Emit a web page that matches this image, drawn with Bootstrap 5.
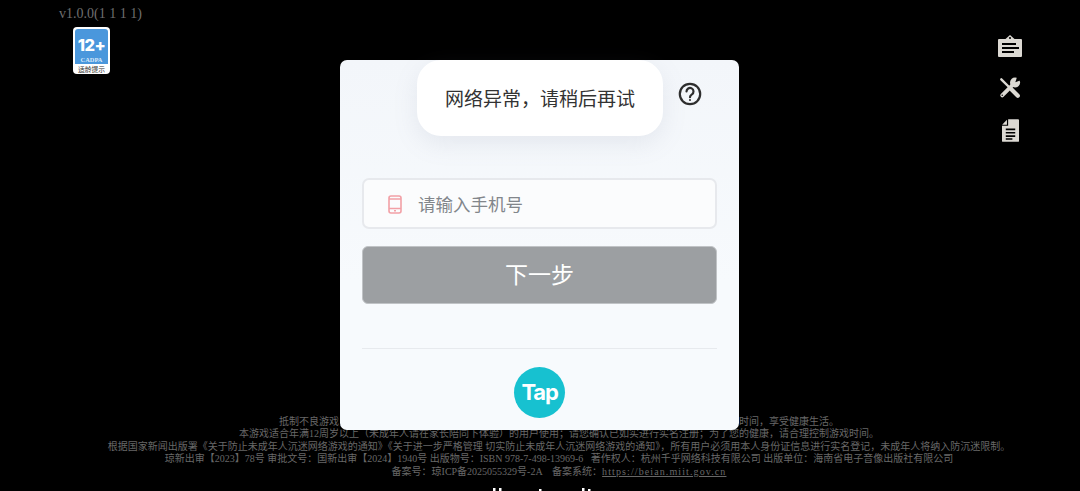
<!DOCTYPE html>
<html lang="zh-CN">
<head>
  <meta charset="UTF-8">
  <meta name="viewport" content="width=device-width, initial-scale=1.0">
  <title>登录</title>
  <link rel="stylesheet" href="https://cdn.jsdelivr.net/npm/bootstrap@5.3.0/dist/css/bootstrap.min.css">
  <style>
    html, body { height: 491px; overflow: hidden; background: #000; }
    body { font-family: "Noto Sans CJK SC", "Noto Sans", sans-serif; }
    .game-screen { height: 491px; overflow: hidden; }
    .top-left { padding: 6px 0 0 59px; }
    .version-text { font: 14px/16px "Liberation Serif", "Noto Sans CJK SC", serif; color: #6e6e6e; }
    .age-badge { display: block; margin: 5px 0 0 14px; }
    .side-tools { padding: 35px 58px 0 0; gap: 20px; }
    .legal-text { font: 10px/12.4px "Liberation Serif", "Noto Sans CJK SC", serif; color: #686868; padding-left: 38px; white-space: nowrap; }
    .legal-text a { color: #686868; letter-spacing: 1.1px; }
    .cut-title { display: block; margin-top: 10px; flex-shrink: 0; }
    .login-box { position: absolute; left: 340px; top: 60px; width: 399px; height: 370px; background: linear-gradient(180deg, #f3f6fa 0%, #f7fafd 60%); border-radius: 7px; padding: 118px 22px 0; }
    .toast-box { position: absolute; left: 77px; top: 0; width: 246px; height: 76px; padding-top: 1px; background: #fff; border-radius: 24px; box-shadow: 0 8px 24px rgba(120, 135, 155, .13); color: #333; font-size: 19px; }
    .help-icon { position: absolute; left: 338px; top: 22px; }
    .phone-field { height: 51px; background: #fbfcfd; border: 2px solid #e7e9ed; border-radius: 7px; padding: 1px 0 0 24px; gap: 16px; }
    .phone-hint { font-size: 17.5px; color: #82868b; }
    .next-btn { display: block; width: 100%; height: 58px; margin-top: 17px; background: #9b9ea1; border: 1px solid #c0c3c6; border-radius: 6px; color: #fff; font-size: 23px; padding: 0 0 3px; }
    .next-btn:disabled { background: #9c9fa2; border-color: #c0c3c6; color: #fff; opacity: 1; }
    .box-line { height: 1px; margin: 44px 0 0; background: #e7eaee; }
    .tap-logo { width: 51px; height: 51px; margin: 18px auto 0; padding-bottom: 2px; background: #17c1d0; color: #fff; font: 700 22px/1 "Inter", sans-serif; letter-spacing: -1.2px; }
  </style>
</head>
<body>
<div class="game-screen d-flex flex-column">
  <div class="d-flex justify-content-between align-items-start flex-grow-1">
    <div class="top-left">
      <div class="version-text">v1.0.0(1 1 1 1)</div>
      <svg class="age-badge" width="37" height="47" viewBox="0 0 37 47">
        <rect width="37" height="47" rx="4" fill="#fff"/>
        <path d="M2 5a3 3 0 0 1 3-3h27a3 3 0 0 1 3 3v32H2z" fill="#4a97dc"/>
        <text x="18.5" y="24" text-anchor="middle" fill="#fff" font-family="Inter, sans-serif" font-weight="800" font-size="16.5" letter-spacing="-.5">12+</text>
        <text x="18.5" y="34.5" text-anchor="middle" fill="#dbeafa" font-family="Liberation Serif, serif" font-weight="700" font-size="6.4">CADPA</text>
        <text x="18.5" y="44.5" text-anchor="middle" fill="#333" font-family="Noto Sans CJK SC, sans-serif" font-size="6.8">适龄提示</text>
      </svg>
    </div>
    <div class="side-tools d-flex flex-column align-items-center">
      <svg width="24" height="22" viewBox="0 0 24 22">
        <path d="M1 4h6.500L12 0l4.500 4H23a1 1 0 0 1 1 1v16a1 1 0 0 1-1 1H1a1 1 0 0 1-1-1V5a1 1 0 0 1 1-1z" fill="#dcd9d3"/>
        <circle cx="12" cy="3" r="1.100" fill="#000"/>
        <path d="M4 8h14v2H4zM4 12h17v2H4zM4 16h12v2H4z" fill="#000"/>
      </svg>
      <svg width="24" height="22" viewBox="0 0 24 24" fill="none" stroke="#dcd9d3" stroke-linecap="round">
        <path d="M2.500 2.500L12 12" stroke-width="2.600"/>
        <path d="M14 14l6.500 6.500" stroke-width="4.600"/>
        <path d="M3.500 20L15 8.500" stroke-width="4.200"/>
        <circle cx="17.500" cy="6" r="5.500" fill="#dcd9d3" stroke="none"/>
        <path d="M17.800 5.800L20 -1l5 4z" fill="#000" stroke="none"/>
        <circle cx="3.500" cy="20" r=".8" fill="#000" stroke="none"/>
      </svg>
      <svg width="17" height="23" viewBox="0 0 18 24">
        <path d="M6.500 0H17a1 1 0 0 1 1 1v22a1 1 0 0 1-1 1H1a1 1 0 0 1-1-1V7h6.500z" fill="#dcd9d3"/>
        <path d="M5.200 .5v5.300H.2z" fill="#dcd9d3"/>
        <path d="M4 10h10v1.800H4zM4 13.500h10v1.800H4zM4 17h10v1.800H4zM4 20.300h7v1.500H4z" fill="#000"/>
      </svg>
    </div>
  </div>
  <div class="legal-text text-center">
    <div>抵制不良游戏，拒绝盗版游戏。注意自我保护，谨防受骗上当。适度游戏益脑，沉迷游戏伤身。合理安排时间，享受健康生活。</div>
    <div>本游戏适合年满12周岁以上（未成年人请在家长陪同下体验）的用户使用；请您确认已如实进行实名注册；为了您的健康，请合理控制游戏时间。</div>
    <div>根据国家新闻出版署《关于防止未成年人沉迷网络游戏的通知》《关于进一步严格管理 切实防止未成年人沉迷网络游戏的通知》，所有用户必须用本人身份证信息进行实名登记，未成年人将纳入防沉迷限制。</div>
    <div>琼新出审【2023】78号 审批文号：国新出审【2024】1940号 出版物号：ISBN 978-7-498-13969-6 &nbsp;&nbsp;著作权人：杭州千乎网络科技有限公司 出版单位：海南省电子音像出版社有限公司</div>
    <div>备案号：琼ICP备2025055329号-2A &nbsp; &nbsp;备案系统：<a href="#">https://beian.miit.gov.cn</a></div>
  </div>
  <svg class="cut-title" width="1080" height="3" viewBox="0 0 1080 3" fill="#fff">
    <rect x="493" y="0" width="2.500" height="3"/>
    <rect x="499" y="0" width="2.500" height="3"/>
    <rect x="539" y="1" width="2.500" height="2"/>
    <rect x="582" y="0" width="2.500" height="3"/>
    <rect x="588" y="1" width="2.500" height="2"/>
  </svg>
</div>

<div class="login-box">
  <div class="toast-box d-flex align-items-center justify-content-center">网络异常，请稍后再试</div>
  <svg class="help-icon" width="24" height="24" viewBox="0 0 24 24" fill="none" stroke="#2e2e2e" stroke-width="2.200">
    <circle cx="12" cy="12" r="10.200"/>
    <path d="M8.500 9.500a3.500 3.500 0 1 1 5.400 2.900c-1.300.8-1.900 1.400-1.900 2.800" stroke-linecap="round"/>
    <circle cx="12" cy="18" r=".6" fill="#2e2e2e" stroke-width="1"/>
  </svg>
  <div class="phone-field d-flex align-items-center">
    <svg width="14" height="19" viewBox="0 0 14 19" fill="none" stroke="#f2a0a6" stroke-width="1.600">
      <rect x="1" y="1" width="12" height="17" rx="2"/>
      <path d="M1 13.500h12M1 4h12"/>
      <path d="M6 15.700h2"/>
    </svg>
    <span class="phone-hint">请输入手机号</span>
  </div>
  <button class="btn next-btn" type="button" disabled>下一步</button>
  <div class="box-line"></div>
  <div class="tap-logo rounded-circle d-flex align-items-center justify-content-center">Tap</div>
</div>

<script src="https://cdn.jsdelivr.net/npm/bootstrap@5.3.0/dist/js/bootstrap.bundle.min.js"></script>
</body>
</html>
